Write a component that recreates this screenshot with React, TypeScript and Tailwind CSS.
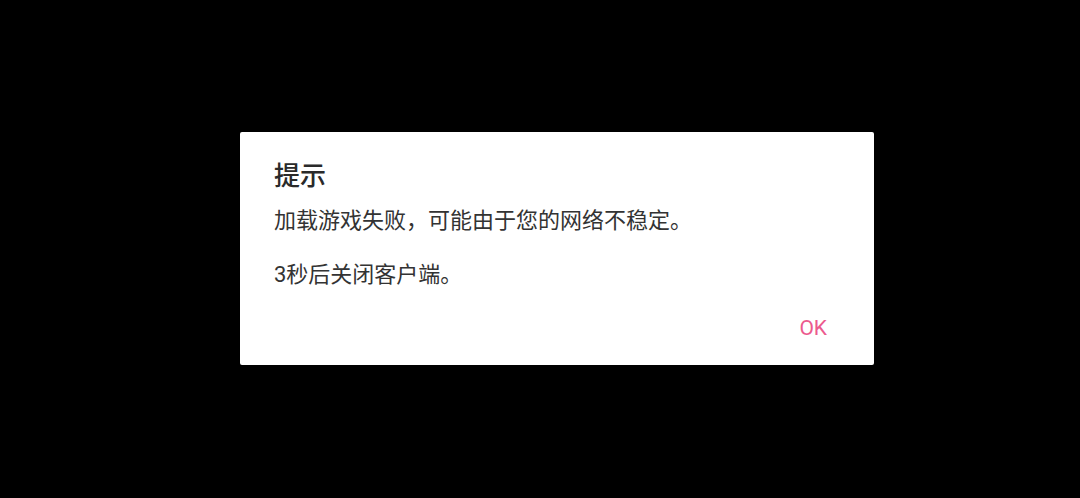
export default function App() {
  return (
    <div
      className="w-full h-[498px] bg-black pt-[132px] pl-[240px] overflow-hidden"
      style={{ fontFamily: 'Roboto, "Noto Sans CJK SC", sans-serif' }}
    >
      <div className="w-[634px] h-[233px] bg-white rounded-[2px] pt-[28px] pl-[34px] pr-[47px] flex flex-col">
        <h2 className="text-[26px] leading-[33px] text-[#2a2a2a] font-medium">提示</h2>
        <div className="mt-[14px] text-[22px] leading-[27px] text-[#333333]">
          <p>加载游戏失败，可能由于您的网络不稳定。</p>
          <p className="mt-[27px]">3秒后关闭客户端。</p>
        </div>
        <div className="mt-[28px] flex justify-end">
          <button className="text-[21px] leading-[24px] text-[#ec5a8e]">OK</button>
        </div>
      </div>
    </div>
  );
}
